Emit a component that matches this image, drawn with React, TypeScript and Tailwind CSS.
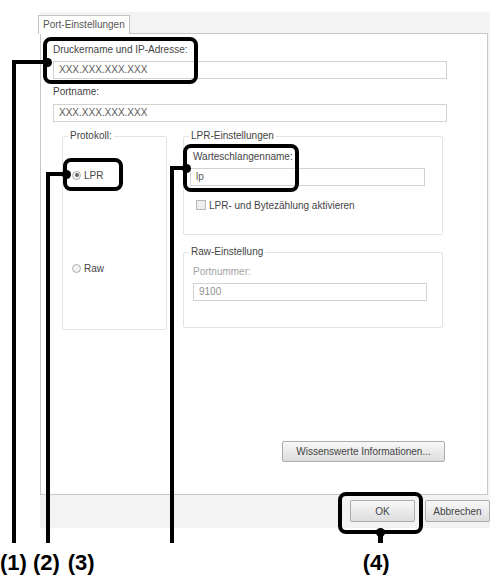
import React from "react";

function Field({ value, className = "", muted = false }: { value: string; className?: string; muted?: boolean }) {
  return (
    <div
      className={`h-[18px] border border-[#d2d2d2] bg-white pl-[5px] text-[10px] leading-[16px] ${
        muted ? "text-[#8f8f8f]" : "text-[#5a5a5a]"
      } ${className}`}
    >
      {value}
    </div>
  );
}

function Radio({ checked, label }: { checked?: boolean; label: string }) {
  return (
    <div className="flex h-[12px] items-center gap-[3px]">
      <span className="flex h-[9px] w-[9px] items-center justify-center rounded-full border border-[#b0b0b0] bg-[#f2f2f2]">
        {checked && <span className="h-[4px] w-[4px] rounded-full bg-[#666]" />}
      </span>
      <span className="text-[10px] text-[#444]">{label}</span>
    </div>
  );
}

function Group({ title, className = "", body = "", children }: { title: string; className?: string; body?: string; children: React.ReactNode }) {
  return (
    <fieldset className={`rounded-[2px] border border-[#e3e3e3] ${className}`}>
      <legend className="ml-[5px] px-[2px] text-[10px] leading-[12px] text-[#444]">{title}</legend>
      <div className={body}>{children}</div>
    </fieldset>
  );
}

function Callout({ className }: { className: string }) {
  return <div className={`absolute rounded-[8px] border-[4px] border-black ${className}`} />;
}

// L-shaped leader line: vertical stroke down to the labels, short arm to the callout, dot at the end
function Leader({ className, arm }: { className: string; arm: string }) {
  return (
    <div className={`absolute border-l-[4px] border-t-[4px] border-black ${className}`}>
      <div className={`-mt-[6.5px] h-[9px] w-[9px] rounded-full bg-black ${arm}`} />
    </div>
  );
}

const btn =
  "h-[22px] w-[65px] rounded-[2px] border border-[#acacac] bg-gradient-to-b from-[#f8f8f8] to-[#dddddd] text-[10px] text-[#444]";

const label = "text-[22px] font-bold leading-[26px] text-black";

export default function App() {
  return (
    <div className="relative h-[578px] w-[495px] overflow-hidden bg-white font-['Liberation_Sans',Arial,sans-serif]">
      <div className="pl-[40px] pt-[12px]">
        <div className="w-[450px] bg-[#f3f3f3]">
          {/* tab strip */}
          <div className="flex h-[21px] items-end">
            <div className="relative z-10 -mb-px -ml-[2px] h-[19px] w-[92px] border border-b-0 border-[#c2c2c2] bg-white pl-[4px] text-[10px] leading-[18px] text-[#555]">
              Port-Einstellungen
            </div>
          </div>

          {/* page */}
          <div className="h-[462px] w-[448px] border border-[#c8c8c8] bg-white pl-[12px] pt-[10px]">
            <div className="text-[10px] leading-[12px] text-[#444]">Druckername und IP-Adresse:</div>
            <Field value="XXX.XXX.XXX.XXX" className="mt-[5px] w-[394px]" />
            <div className="mt-[7px] text-[10px] leading-[12px] text-[#444]">Portname:</div>
            <Field value="XXX.XXX.XXX.XXX" className="mt-[6px] w-[394px]" />

            <div className="ml-[9px] mt-[8px] flex gap-[16px]">
              <Group title="Protokoll:" className="h-[200px] w-[105px]" body="pl-[9px] pt-[27px]">
                <Radio checked label="LPR" />
                <div className="mt-[81px]">
                  <Radio label="Raw" />
                </div>
              </Group>

              <div className="flex flex-col gap-[11px]">
                <Group title="LPR-Einstellungen" className="h-[105px] w-[260px]" body="pl-[6px] pt-[9px]">
                  <div className="ml-[3px] text-[10px] leading-[12px] text-[#444]">Warteschlangenname:</div>
                  <Field value="lp" className="mt-[5px] w-[235px]" />
                  <div className="ml-[6px] mt-[13px] flex h-[12px] items-center gap-[3px]">
                    <span className="h-[10px] w-[10px] border border-[#b8b8b8] bg-[#eeeeee]" />
                    <span className="text-[10px] text-[#444]">LPR- und Bytezählung aktivieren</span>
                  </div>
                </Group>
                <Group title="Raw-Einstellung" className="h-[82px] w-[260px]" body="pl-[9px] pt-[8px]">
                  <div className="text-[10px] leading-[12px] text-[#a3a3a3]">Portnummer:</div>
                  <Field value="9100" muted className="mt-[5px] h-[17px] w-[234px]" />
                </Group>
              </div>
            </div>

            <button className="ml-[229px] mt-[111px] h-[21px] w-[163px] rounded-[2px] border border-[#acacac] bg-gradient-to-b from-[#f8f8f8] to-[#dddddd] text-[10px] text-[#444]">
              Wissenswerte Informationen...
            </button>
          </div>

          {/* button bar */}
          <div className="flex h-[33px] justify-end gap-[10px] pt-[5px]">
            <button className={btn}>OK</button>
            <button className={btn}>Abbrechen</button>
          </div>
        </div>
      </div>

      {/* step labels */}
      <div className="mt-[22px] flex">
        <span className={label}>(1)</span>
        <span className={`ml-[6px] ${label}`}>(2)</span>
        <span className={`ml-[8px] ${label}`}>(3)</span>
        <span className={`ml-[268px] ${label}`}>(4)</span>
      </div>

      {/* callouts */}
      <Callout className="left-[43px] top-[37px] h-[47px] w-[155px]" />
      <Callout className="left-[63px] top-[158px] h-[33px] w-[60px]" />
      <Callout className="left-[183px] top-[144px] h-[48px] w-[116px]" />
      <Callout className="left-[338px] top-[492px] h-[42px] w-[85px]" />

      <Leader className="left-[12px] top-[60px] h-[483px] w-[33px]" arm="ml-[27px]" />
      <Leader className="left-[46px] top-[172px] h-[371px] w-[18px]" arm="ml-[12px]" />
      <Leader className="left-[170px] top-[166px] h-[377px] w-[14px]" arm="ml-[8px]" />
      <div className="absolute left-[376px] top-[528px] flex w-[9px] flex-col items-center">
        <span className="h-[9px] w-[9px] rounded-full bg-black" />
        <span className="-mt-[2px] h-[8px] w-[5px] bg-black" />
      </div>
    </div>
  );
}
